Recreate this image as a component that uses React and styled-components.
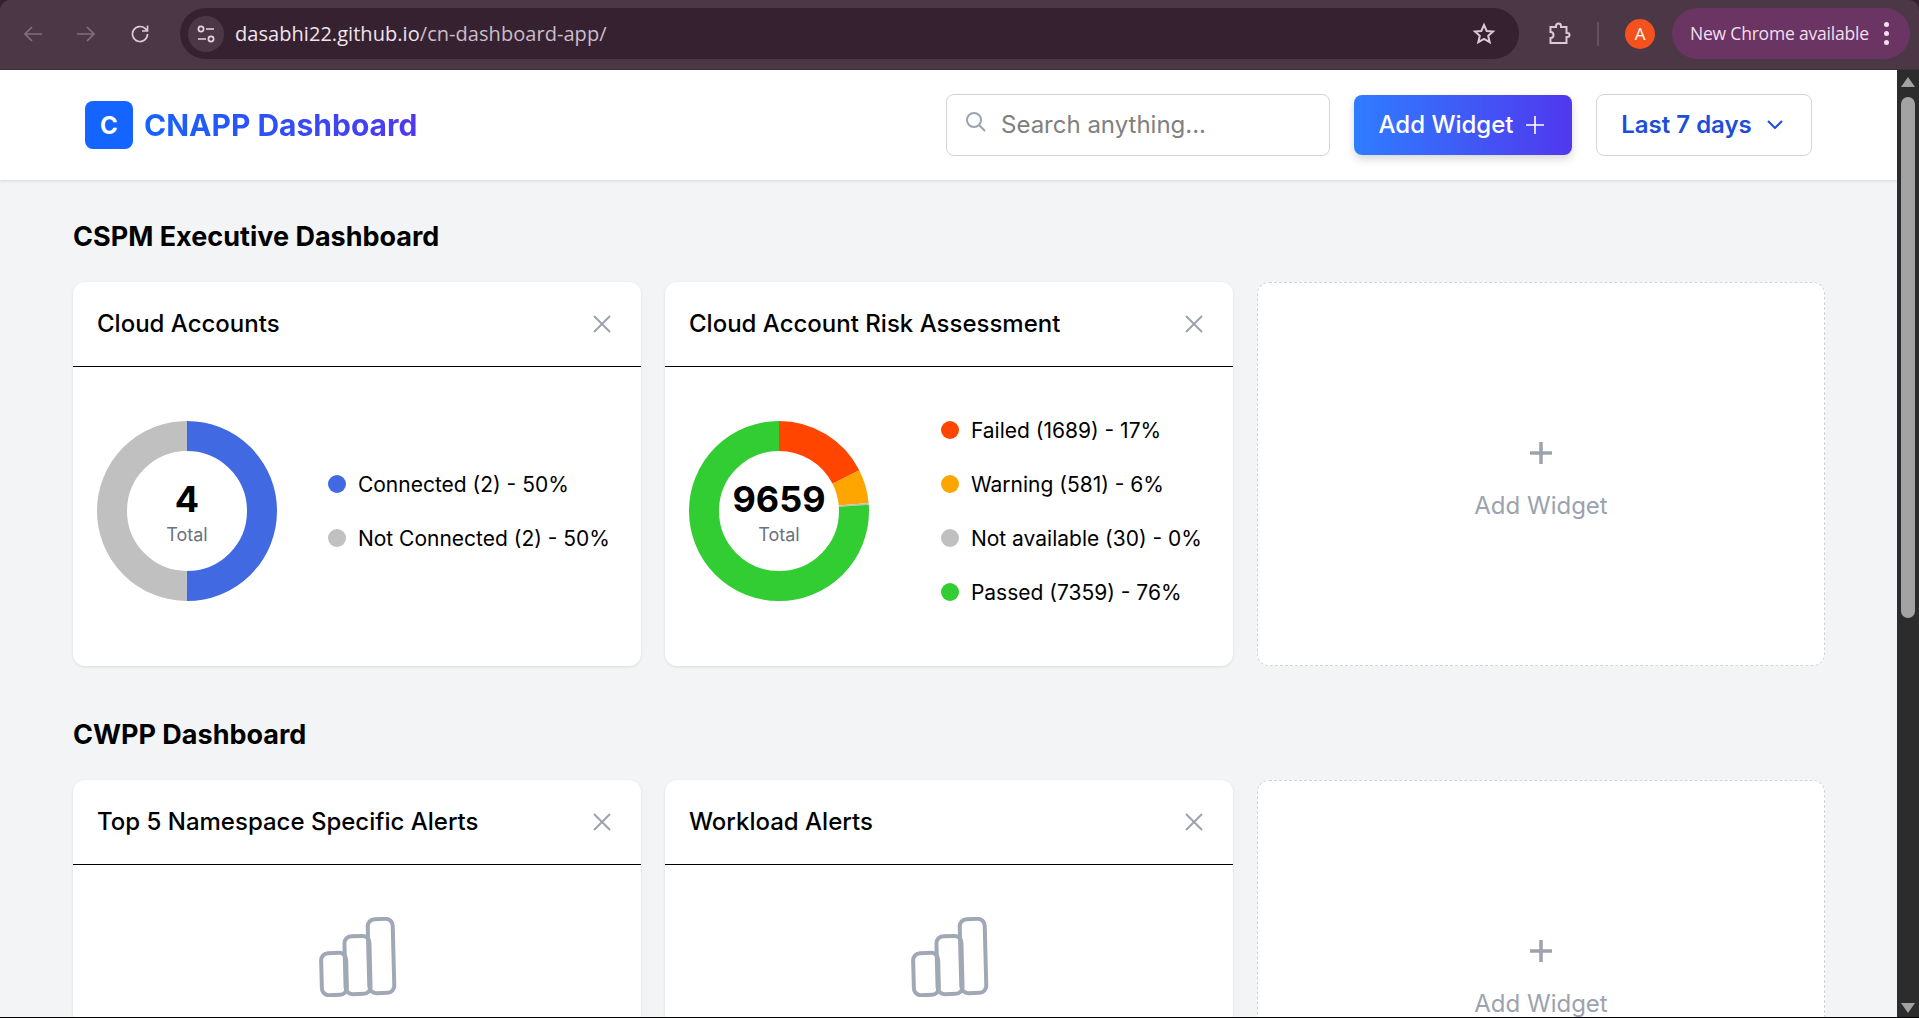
import styled, { createGlobalStyle } from "styled-components";

const GlobalStyle = createGlobalStyle`
  html, body {
    margin: 0;
    height: 100%;
    overflow: hidden;
    background: #2b2b2b;
  }
  * {
    box-sizing: border-box;
  }
`;

const Window = styled.div`
  width: 1919px;
  height: 1018px;
  display: flex;
  flex-direction: column;
  overflow: hidden;
  border-bottom: 1px solid #000;
  background: #33232f;
  font-family: Inter, "Liberation Sans", sans-serif;
`;

const BrowserBar = styled.div`
  height: 70px;
  flex-shrink: 0;
  display: flex;
  align-items: center;
  padding: 0 9px 2px 0;
  background: #4c3747;
  border-radius: 10px 10px 0 0;
  border-bottom: 1px solid #3f2e3b;
`;

const NavIcon = styled.svg`
  width: 24px;
  height: 24px;
  flex-shrink: 0;
  margin-left: ${(p) => p.$left}px;
  stroke: ${(p) => (p.$dim ? "#826f7e" : "#dcc8d6")};
  fill: none;
  stroke-width: ${(p) => p.$weight || 1.7};
`;

const Omnibox = styled.div`
  width: 1339px;
  height: 51px;
  margin-left: 28px;
  padding: 0 23px 0 8px;
  display: flex;
  align-items: center;
  border-radius: 26px;
  background: #352130;
`;

const TuneBadge = styled.div`
  width: 36px;
  height: 36px;
  border-radius: 50%;
  background: #4c3747;
  display: flex;
  align-items: center;
  justify-content: center;
`;

const Url = styled.div`
  margin-left: 11px;
  flex: 1;
  font-family: "Open Sans", sans-serif;
  font-size: 20px;
  letter-spacing: 0.05px;
  color: #cdbcc8;

  b {
    font-weight: 400;
    color: #f1e4ed;
  }
`;

const Divider = styled.div`
  width: 2px;
  height: 24px;
  margin-left: 26px;
  background: #655261;
`;

const Avatar = styled.div`
  width: 30px;
  height: 30px;
  margin-left: 26px;
  border-radius: 50%;
  background: #f4511e;
  color: #fff;
  display: flex;
  align-items: center;
  justify-content: center;
  font-family: "Open Sans", sans-serif;
  font-size: 17px;
`;

const UpdatePill = styled.div`
  width: 238px;
  height: 51px;
  margin-left: 17px;
  padding: 0 21px 1px 18px;
  display: flex;
  align-items: center;
  justify-content: space-between;
  border-radius: 26px;
  background: #6b3563;
  color: #f2dfee;
  font-family: "Open Sans", sans-serif;
  font-size: 17.5px;
  letter-spacing: -0.2px;
`;

const Dots = styled.div`
  display: flex;
  flex-direction: column;
  gap: 4px;

  i {
    width: 5px;
    height: 5px;
    border-radius: 50%;
    background: #f2dfee;
  }
`;

const Viewport = styled.div`
  flex: 1;
  min-height: 0;
  display: flex;
`;

const Page = styled.div`
  flex: 1;
  min-width: 0;
  overflow: hidden;
  background: #f3f4f6;
`;

const Scrollbar = styled.div`
  width: 22px;
  flex-shrink: 0;
  padding-top: 7px;
  display: flex;
  flex-direction: column;
  align-items: center;
  background: #2c2c2c;
`;

const ScrollArrow = styled.div`
  width: 0;
  height: 0;
  border-left: 7px solid transparent;
  border-right: 7px solid transparent;
  border-bottom: ${(p) => (p.$down ? "0" : "10px solid #a3a3a3")};
  border-top: ${(p) => (p.$down ? "10px solid #a3a3a3" : "0")};
`;

const ScrollThumb = styled.div`
  width: 14px;
  height: 521px;
  margin: 10px 0 385px;
  border-radius: 7px;
  background: #a3a3a3;
`;

const Header = styled.header`
  height: 110px;
  padding: 0 85px;
  display: flex;
  align-items: center;
  background: #fff;
  box-shadow: 0 1px 3px rgba(0, 0, 0, 0.12);
`;

const LogoMark = styled.div`
  width: 48px;
  height: 48px;
  border-radius: 8px;
  background: #1464ff;
  color: #fff;
  display: flex;
  align-items: center;
  justify-content: center;
  font-size: 24px;
  font-weight: 700;
`;

const LogoText = styled.h1`
  margin: 0 auto 0 11px;
  font-size: 30px;
  font-weight: 700;
  background: linear-gradient(90deg, #1464ff, #5038ee);
  -webkit-background-clip: text;
  background-clip: text;
  color: transparent;
`;

const SearchBox = styled.div`
  width: 384px;
  height: 62px;
  padding: 0 18px 2px;
  display: flex;
  align-items: center;
  gap: 14px;
  border: 1px solid #d1d5db;
  border-radius: 8px;
  color: #808080;
  font-size: 24px;
`;

const AddButton = styled.div`
  width: 218px;
  height: 60px;
  margin-left: 24px;
  padding: 0 4px 1px 0;
  display: flex;
  align-items: center;
  justify-content: center;
  gap: 12px;
  border-radius: 8px;
  background: linear-gradient(90deg, #2f7dff, #5038ee);
  box-shadow: 0 4px 8px rgba(0, 0, 0, 0.16);
  color: #fff;
  font-size: 24px;
  font-weight: 500;
`;

const RangeButton = styled.div`
  width: 216px;
  height: 62px;
  margin-left: 24px;
  padding: 0 4px 1px 0;
  display: flex;
  align-items: center;
  justify-content: center;
  gap: 15px;
  border: 1px solid #d1d5db;
  border-radius: 8px;
  color: #1d4ed8;
  font-size: 24px;
  font-weight: 600;
`;

const Content = styled.main`
  width: 1752px;
  margin-left: 73px;
`;

const SectionTitle = styled.h2`
  margin: 0;
  padding-top: ${(p) => p.$top}px;
  height: ${(p) => p.$height}px;
  font-size: 27px;
  line-height: 34px;
  font-weight: 700;
  color: #000;
`;

const CardGrid = styled.div`
  display: grid;
  grid-template-columns: repeat(3, 568px);
  gap: 24px;
`;

const Card = styled.section`
  height: 384px;
  border-radius: 12px;
  background: #fff;
  box-shadow: 0 1px 3px rgba(0, 0, 0, 0.1);
`;

const CardHeader = styled.div`
  height: 85px;
  padding: 0 30px 1px 24px;
  display: flex;
  align-items: center;
  justify-content: space-between;
  border-bottom: 1px solid #000;
`;

const CardTitle = styled.h3`
  margin: 0;
  font-size: 24px;
  font-weight: 500;
  color: #000;
`;

const ChartBody = styled.div`
  height: 180px;
  margin-top: 54px;
  padding: 0 31px 0 24px;
  display: flex;
  align-items: center;
  justify-content: space-between;
`;

const DonutWrap = styled.div`
  position: relative;
  width: 180px;
  height: 180px;
  flex-shrink: 0;
`;

const DonutCenter = styled.div`
  position: absolute;
  top: 58px;
  left: 0;
  width: 180px;
  display: flex;
  flex-direction: column;
  align-items: center;
`;

const DonutValue = styled.div`
  font-size: 36px;
  line-height: 40px;
  font-weight: 700;
  color: #000;
`;

const DonutLabel = styled.div`
  margin-top: 5px;
  font-size: 18px;
  line-height: 22px;
  color: #6b7280;
`;

const Legend = styled.ul`
  margin: 0;
  padding: 0;
  list-style: none;
  display: flex;
  flex-direction: column;
  gap: 24px;
`;

const LegendItem = styled.li`
  height: 30px;
  display: flex;
  align-items: center;
  gap: 12px;
  font-size: 21px;
  color: #000;
`;

const LegendDot = styled.span`
  width: 18px;
  height: 18px;
  border-radius: 50%;
  background: ${(p) => p.$color};
`;

const EmptyBody = styled.div`
  height: 298px;
  display: flex;
  justify-content: center;
  padding: 52px 0 0 2px;
`;

const AddTile = styled.div`
  height: 384px;
  display: flex;
  flex-direction: column;
  align-items: center;
  justify-content: center;
  gap: 27px;
  padding-top: 14px;
  border: 1px dashed #d1d5db;
  border-radius: 12px;
  background: #fff;
  color: #9ca3af;
  font-size: 24px;
`;

const CloseIcon = () => (
  <svg width="18" height="18" viewBox="0 0 18 18" stroke="#9ca3af" strokeWidth="2" fill="none">
    <path d="M1 1l16 16M17 1L1 17" />
  </svg>
);

const PlusIcon = ({ size, color, width }) => (
  <svg width={size} height={size} viewBox="0 0 22 22" stroke={color} strokeWidth={width} fill="none">
    <path d="M11 0v22M0 11h22" />
  </svg>
);

const BarsIcon = () => (
  <svg width="80" height="80" viewBox="0 0 80 80" fill="none" stroke="#a1a8b5" strokeWidth="4">
    <rect x="3.5" y="36" width="25" height="42" rx="7" transform="rotate(-1.5 16 57)" />
    <rect x="27" y="19" width="25" height="58" rx="7" transform="rotate(-1.5 40 48)" />
    <rect x="50.5" y="2" width="25" height="74" rx="7" transform="rotate(-1.5 63 39)" />
  </svg>
);

// recharts-like pie drawn with stroked arcs
const Donut = ({ segments, total }) => {
  const radius = 75;
  const length = 2 * Math.PI * radius;
  let offset = 0;
  return (
    <DonutWrap>
      <svg width="180" height="180" viewBox="0 0 180 180" fill="none">
        <g transform="rotate(-90 90 90)" strokeWidth="30">
          {segments.map((s) => {
            const dash = (s.value / total) * length;
            const arc = (
              <circle
                key={s.color}
                cx="90"
                cy="90"
                r={radius}
                stroke={s.color}
                strokeDasharray={`${dash} ${length - dash}`}
                strokeDashoffset={-offset}
              />
            );
            offset += dash;
            return arc;
          })}
        </g>
      </svg>
      <DonutCenter>
        <DonutValue>{total}</DonutValue>
        <DonutLabel>Total</DonutLabel>
      </DonutCenter>
    </DonutWrap>
  );
};

const CardTop = ({ title }) => (
  <CardHeader>
    <CardTitle>{title}</CardTitle>
    <CloseIcon />
  </CardHeader>
);

const ChartCard = ({ title, segments, total }) => (
  <Card>
    <CardTop title={title} />
    <ChartBody>
      <Donut segments={segments} total={total} />
      <Legend>
        {segments.map((s) => (
          <LegendItem key={s.label}>
            <LegendDot $color={s.color} />
            {s.label}
          </LegendItem>
        ))}
      </Legend>
    </ChartBody>
  </Card>
);

const EmptyCard = ({ title }) => (
  <Card>
    <CardTop title={title} />
    <EmptyBody>
      <BarsIcon />
    </EmptyBody>
  </Card>
);

const AddWidgetTile = () => (
  <AddTile>
    <PlusIcon size={22} color="#9ca3af" width={3.5} />
    Add Widget
  </AddTile>
);

const accounts = [
  { label: "Connected (2) - 50%", color: "#4169e1", value: 2 },
  { label: "Not Connected (2) - 50%", color: "#c0c0c0", value: 2 },
];

const risk = [
  { label: "Failed (1689) - 17%", color: "#ff4500", value: 1689 },
  { label: "Warning (581) - 6%", color: "#ffa500", value: 581 },
  { label: "Not available (30) - 0%", color: "#c0c0c0", value: 30 },
  { label: "Passed (7359) - 76%", color: "#32cd32", value: 7359 },
];

const App = () => {
  return (
    <>
      <GlobalStyle />
      <Window>
        <BrowserBar>
          <NavIcon $left={21} $dim viewBox="0 0 24 24">
            <path d="M21 12H4M11 5l-7 7 7 7" />
          </NavIcon>
          <NavIcon $left={29} $dim viewBox="0 0 24 24">
            <path d="M3 12h17M13 5l7 7-7 7" />
          </NavIcon>
          <NavIcon $left={30} viewBox="0 0 24 24">
            <path d="M19.5 12a7.5 7.5 0 1 1-2.2-5.3L19.5 9M19.5 3.5V9H14" />
          </NavIcon>
          <Omnibox>
            <TuneBadge>
              <svg width="22" height="22" viewBox="0 0 22 22" fill="none" stroke="#e6d5e0" strokeWidth="1.7">
                <circle cx="6" cy="6" r="2.6" />
                <path d="M11 6h8M3 16h8" />
                <circle cx="16" cy="16" r="2.6" />
              </svg>
            </TuneBadge>
            <Url>
              <b>dasabhi22.github.io</b>/cn-dashboard-app/
            </Url>
            <svg width="24" height="24" viewBox="0 0 24 24" fill="none" stroke="#dcc8d6" strokeWidth="2">
              <path d="M12 3l2.7 6 6.3.6-4.8 4.2 1.5 6.4L12 16.8 6.3 20.2l1.5-6.4L3 9.6 9.3 9z" />
            </svg>
          </Omnibox>
          <NavIcon $left={28} $weight={2} viewBox="0 0 24 24">
            <path d="M3.5 5H9V4a2.5 2.5 0 0 1 5 0v1h5.5v6h1a2 2 0 0 1 0 4h-1v6H3.5v-5a3 3 0 0 0 0-6z" />
          </NavIcon>
          <Divider />
          <Avatar>A</Avatar>
          <UpdatePill>
            New Chrome available
            <Dots>
              <i />
              <i />
              <i />
            </Dots>
          </UpdatePill>
        </BrowserBar>
        <Viewport>
          <Page>
            <Header>
              <LogoMark>C</LogoMark>
              <LogoText>CNAPP Dashboard</LogoText>
              <SearchBox>
                <svg width="22" height="22" viewBox="0 0 22 22" fill="none" stroke="#9ca3af" strokeWidth="2" style={{ marginTop: -4 }}>
                  <circle cx="9" cy="9" r="7" />
                  <path d="M14 14l6 6" />
                </svg>
                Search anything...
              </SearchBox>
              <AddButton>
                Add Widget
                <PlusIcon size={18} color="#fff" width={2} />
              </AddButton>
              <RangeButton>
                Last 7 days
                <svg width="16" height="9" viewBox="0 0 16 9" fill="none" stroke="#1d4ed8" strokeWidth="2">
                  <path d="M1 1l7 7 7-7" />
                </svg>
              </RangeButton>
            </Header>
            <Content>
              <SectionTitle $top={40} $height={102}>CSPM Executive Dashboard</SectionTitle>
              <CardGrid>
                <ChartCard title="Cloud Accounts" segments={accounts} total={4} />
                <ChartCard title="Cloud Account Risk Assessment" segments={risk} total={9659} />
                <AddWidgetTile />
              </CardGrid>
              <SectionTitle $top={52} $height={114}>CWPP Dashboard</SectionTitle>
              <CardGrid>
                <EmptyCard title="Top 5 Namespace Specific Alerts" />
                <EmptyCard title="Workload Alerts" />
                <AddWidgetTile />
              </CardGrid>
            </Content>
          </Page>
          <Scrollbar>
            <ScrollArrow />
            <ScrollThumb />
            <ScrollArrow $down />
          </Scrollbar>
        </Viewport>
      </Window>
    </>
  );
};

export default App;
